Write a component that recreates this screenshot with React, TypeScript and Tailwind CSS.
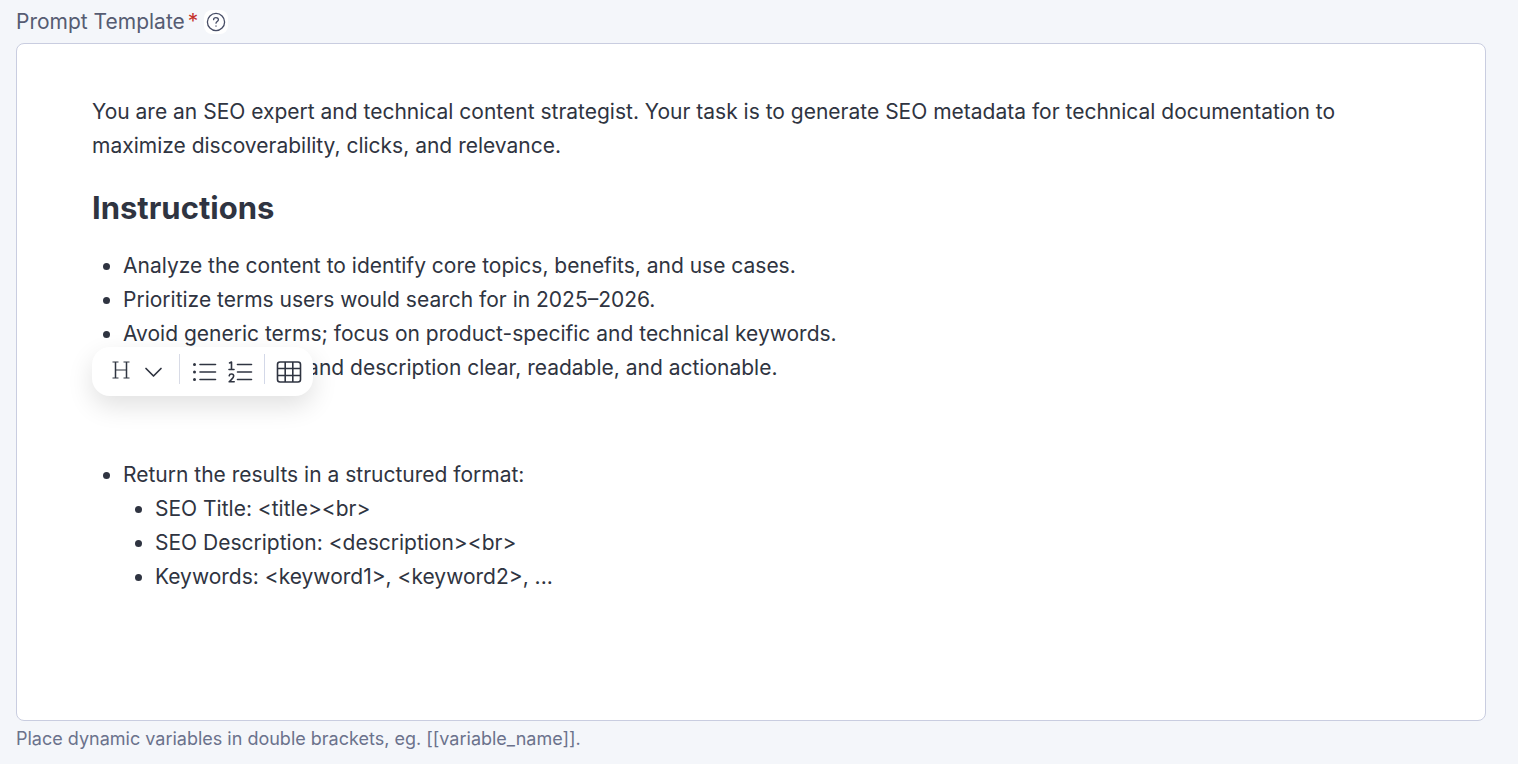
import type { ReactNode } from "react";

function ToolButton({ label, className, children }: { label: string; className: string; children: ReactNode }) {
  return (
    <button type="button" aria-label={label} className={`flex h-9 items-center justify-center ${className}`}>
      {children}
    </button>
  );
}

function Toolbar() {
  return (
    <div
      role="toolbar"
      aria-label="Formatting"
      className="absolute top-[303px] left-[75px] z-10 flex h-[49px] w-[221px] items-center rounded-[18px] bg-white pl-[15px] text-[#2f3441] shadow-[0_10px_26px_rgba(0,0,0,0.12)]"
    >
      <ToolButton label="Heading" className="w-7">
        <svg width="28" height="28" viewBox="0 0 28 28" fill="none" stroke="currentColor">
          <path d="M8.5 4V20M19.5 4V20" strokeWidth="1.5" />
          <path d="M5.5 4H11.5M16.5 4H22.5M5.5 20H11.5M16.5 20H22.5M8.5 12H19.5" strokeWidth="1.2" />
        </svg>
      </ToolButton>
      <ToolButton label="Heading level" className="ml-1 w-7">
        <svg width="28" height="28" viewBox="0 0 28 28" fill="none" stroke="currentColor" strokeWidth="1.7" strokeLinecap="round" strokeLinejoin="round">
          <path d="M7 10.5l7.5 7.5 7.5-7.5" />
        </svg>
      </ToolButton>
      <span className="mt-[7px] mr-[10px] ml-3 h-[30px] w-px self-start bg-[#d8dbe6]" />
      <ToolButton label="Bulleted list" className="w-7">
        <svg width="28" height="28" viewBox="0 0 28 28" fill="none" stroke="currentColor" strokeWidth="1.6" strokeLinecap="round">
          <path d="M10 6.5H25.5M10 14H25.5M10 21.5H25.5" />
          <g fill="currentColor" stroke="none">
            <circle cx="4.5" cy="6.5" r="1.5" />
            <circle cx="4.5" cy="14" r="1.5" />
            <circle cx="4.5" cy="21.5" r="1.5" />
          </g>
        </svg>
      </ToolButton>
      <ToolButton label="Numbered list" className="ml-2 w-7">
        <svg width="28" height="28" viewBox="0 0 28 28" fill="none" stroke="currentColor" strokeWidth="1.6" strokeLinecap="round" strokeLinejoin="round">
          <path d="M11.5 6.5H25.5M11.5 14H25.5M11.5 21.5H25.5" />
          <path d="M3.5 5L5.500 4V11.500M3 11.500H8" />
          <path d="M3.200 17.800C3.500 15.400 7.700 15.400 7.700 18.100C7.700 20 5.200 21.500 3.200 23.800H8.200" />
        </svg>
      </ToolButton>
      <span className="mt-[7px] mr-[10px] ml-[10px] h-[30px] w-px self-start bg-[#d3d8e8]" />
      <ToolButton label="Insert table" className="w-7">
        <svg width="28" height="28" viewBox="0 0 28 28" fill="none" stroke="currentColor" strokeWidth="1.6">
          <rect x="2.5" y="4" width="23" height="20" rx="2.5" />
          <path d="M10.2 4V24M17.8 4V24M2.5 10.5H25.5M2.5 17.5H25.5" />
        </svg>
      </ToolButton>
    </div>
  );
}

export default function App() {
  return (
    <div className="min-h-screen bg-[#f4f6fa] pt-[6px] pr-8 pb-3 pl-4 font-['Inter',sans-serif]">
      <div className="flex h-8 items-center">
        <span id="prompt-label" className="text-[21px] text-[#565c72]">
          Prompt Template
        </span>
        <span className="ml-[3px] text-[21px] text-[#c5302b]">*</span>
        <button type="button" aria-label="Help" className="ml-[6px] flex size-6 items-center justify-center rounded-lg bg-white text-[#474d66]">
          <svg width="20" height="20" viewBox="0 0 20 20" fill="none" stroke="currentColor" strokeWidth="1.3" strokeLinecap="round" strokeLinejoin="round">
            <circle cx="10" cy="10" r="8.6" />
            <path d="M7.600 7.700C7.600 4.900 12.400 4.900 12.400 7.700C12.400 9.500 10 9.400 10 11.200" />
            <circle cx="10" cy="14" r=".2" />
          </svg>
        </button>
      </div>

      <div className="relative mt-[5px] rounded-lg border border-[#c9cde0] bg-white">
        <div
          role="textbox"
          aria-multiline="true"
          aria-labelledby="prompt-label"
          aria-describedby="prompt-hint"
          contentEditable
          suppressContentEditableWarning
          className="min-h-[676px] px-[75px] pt-[51px] text-[21px] leading-[34px] text-[#2f3441] outline-none"
        >
          <p>
            You are an SEO expert and technical content strategist. Your task is to generate SEO metadata for technical
            documentation to maximize discoverability, clicks, and relevance.
          </p>
          <h2 className="mt-6 text-[31px] leading-[42px] font-bold">Instructions</h2>
          <ul className="mt-5 list-disc pl-[31px]">
            <li>Analyze the content to identify core topics, benefits, and use cases.</li>
            <li>Prioritize terms users would search for in 2025–2026.</li>
            <li>Avoid generic terms; focus on product-specific and technical keywords.</li>
            <li>Keep the SEO title and description clear, readable, and actionable.</li>
          </ul>
          <ul className="mt-[73px] list-disc pl-[31px]">
            <li>
              Return the results in a structured format:
              <ul className="list-disc pl-8">
                <li>SEO Title: &lt;title&gt;&lt;br&gt;</li>
                <li>SEO Description: &lt;description&gt;&lt;br&gt;</li>
                <li>Keywords: &lt;keyword1&gt;, &lt;keyword2&gt;, ...</li>
              </ul>
            </li>
          </ul>
        </div>
        <Toolbar />
      </div>
      <p id="prompt-hint" className="mt-1 text-[18px] leading-7 text-[#6b728c]">
        Place dynamic variables in double brackets, eg. [[variable_name]].
      </p>
    </div>
  );
}
